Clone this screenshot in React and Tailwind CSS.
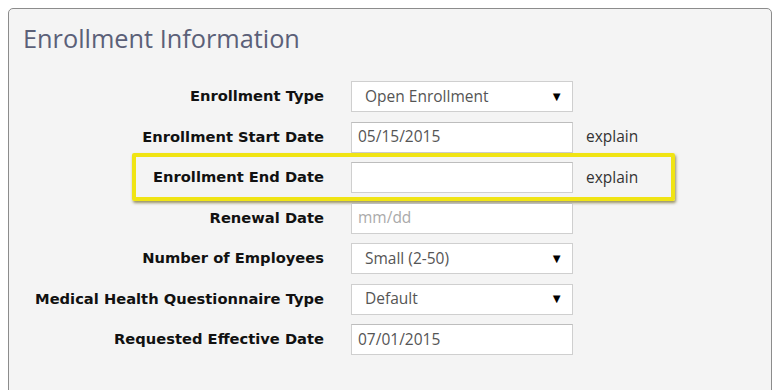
const rows = [
  { label: "Enrollment Type", kind: "select", value: "Open Enrollment" },
  { label: "Enrollment Start Date", kind: "input", value: "05/15/2015", explain: true },
  { label: "Enrollment End Date", kind: "input", value: "", explain: true, highlight: true },
  { label: "Renewal Date", kind: "input", placeholder: "mm/dd" },
  { label: "Number of Employees", kind: "select", value: "Small (2-50)" },
  { label: "Medical Health Questionnaire Type", kind: "select", value: "Default" },
  { label: "Requested Effective Date", kind: "input", value: "07/01/2015" },
];

function Field({ row }) {
  if (row.kind === "select") {
    return (
      <div className="flex h-[31px] w-[222px] items-center justify-between border border-[#cfcfcf] bg-white pl-[13px] pr-[9px] text-[15.5px] text-[#555]">
        <span>{row.value}</span>
        <span className="text-[13px] text-black">▼</span>
      </div>
    );
  }
  return (
    <div className="flex h-[31px] w-[222px] items-center border border-[#cfcfcf] border-t-[#bdbdbd] bg-white pl-[6px] text-[15.5px] text-[#555]">
      {row.value ? <span>{row.value}</span> : <span className="text-[#aaa]">{row.placeholder}</span>}
    </div>
  );
}

export default function App() {
  return (
    <div className="min-h-screen bg-white pl-2 pt-2" style={{ fontFamily: "'Open Sans', 'Noto Sans', sans-serif" }}>
      <div className="h-[420px] w-[764px] rounded-[5px] border border-[#8c8c8c] bg-[#f4f4f4]">
        <h2 className="pl-[14px] pt-[12px] text-[25.3px] leading-[34px] font-normal text-[#5b6078]">Enrollment Information</h2>
        <div className="mt-[26px] flex flex-col gap-[9.5px]">
          {rows.map((row) => (
            <div key={row.label} className="relative flex h-[31px] items-center">
              {row.highlight && (
                <div className="absolute left-[123px] right-[96px] top-[-9px] bottom-[-8px] rounded-[2px] border-[4px] border-[#f0e414] shadow-[1px_2px_3px_rgba(90,80,0,0.6)]" />
              )}
              <div
                className="w-[315px] text-right text-[14.7px] font-bold text-[#111]"
                style={{ fontFamily: "'DejaVu Sans', Verdana, sans-serif" }}
              >
                {row.label}
              </div>
              <div className="ml-[27px]">
                <Field row={row} />
              </div>
              {row.explain && <span className="ml-[13px] text-[15.5px] text-[#333]">explain</span>}
            </div>
          ))}
        </div>
      </div>
    </div>
  );
}
